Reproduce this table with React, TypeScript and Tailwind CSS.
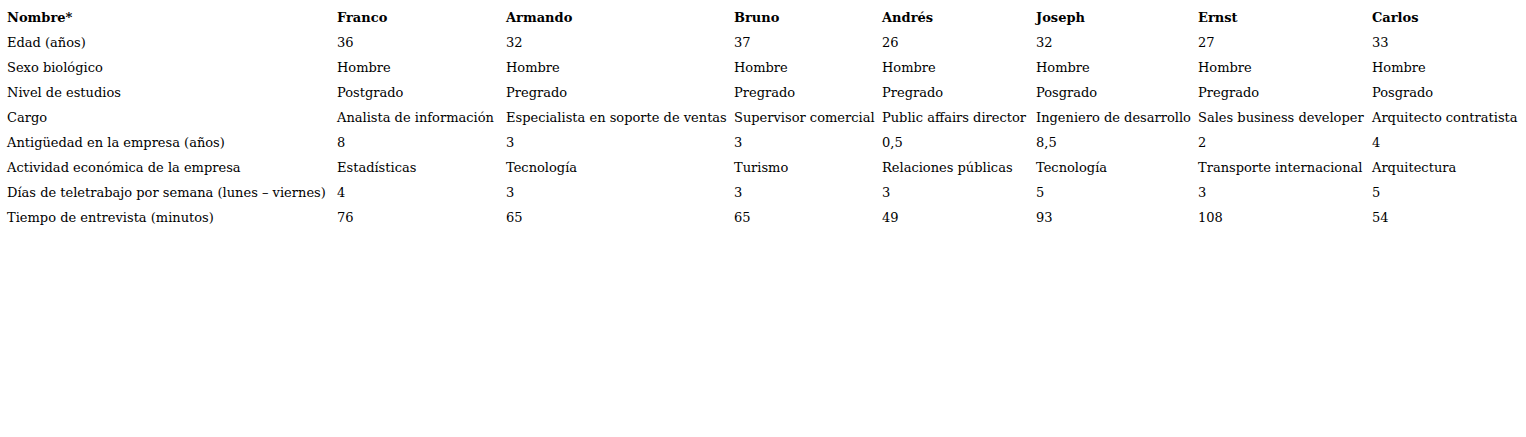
const names = ["Franco", "Armando", "Bruno", "Andrés", "Joseph", "Ernst", "Carlos"];

const rows: [string, string[]][] = [
  ["Edad (años)", ["36", "32", "37", "26", "32", "27", "33"]],
  ["Sexo biológico", ["Hombre", "Hombre", "Hombre", "Hombre", "Hombre", "Hombre", "Hombre"]],
  ["Nivel de estudios", ["Postgrado", "Pregrado", "Pregrado", "Pregrado", "Posgrado", "Pregrado", "Posgrado"]],
  [
    "Cargo",
    [
      "Analista de información",
      "Especialista en soporte de ventas",
      "Supervisor comercial",
      "Public affairs director",
      "Ingeniero de desarrollo",
      "Sales business developer",
      "Arquitecto contratista",
    ],
  ],
  ["Antigüedad en la empresa (años)", ["8", "3", "3", "0,5", "8,5", "2", "4"]],
  [
    "Actividad económica de la empresa",
    ["Estadísticas", "Tecnología", "Turismo", "Relaciones públicas", "Tecnología", "Transporte internacional", "Arquitectura"],
  ],
  ["Días de teletrabajo por semana (lunes – viernes)", ["4", "3", "3", "3", "5", "3", "5"]],
  ["Tiempo de entrevista (minutos)", ["76", "65", "65", "49", "93", "108", "54"]],
];

const widths = ["w-[330px]", "w-[169px]", "w-[228px]", "w-[148px]", "w-[154px]", "w-[162px]", "w-[174px]", "w-[150px]"];

export default function App() {
  return (
    <div className="min-h-[437px] bg-white pl-[7px] pt-[5px] text-[13px] text-black [font-family:'DejaVu_Serif',serif]">
      <table className="table-fixed border-collapse">
        <thead>
          <tr className="h-[25px]">
            <th className={`${widths[0]} p-0 text-left font-bold`}>Nombre*</th>
            {names.map((n, i) => (
              <th key={n} className={`${widths[i + 1]} p-0 text-left font-bold`}>
                {n}
              </th>
            ))}
          </tr>
        </thead>
        <tbody>
          {rows.map(([label, vals]) => (
            <tr key={label} className="h-[25px]">
              <td className="whitespace-nowrap p-0">{label}</td>
              {vals.map((v, i) => (
                <td key={i} className="whitespace-nowrap p-0">
                  {v}
                </td>
              ))}
            </tr>
          ))}
        </tbody>
      </table>
    </div>
  );
}
